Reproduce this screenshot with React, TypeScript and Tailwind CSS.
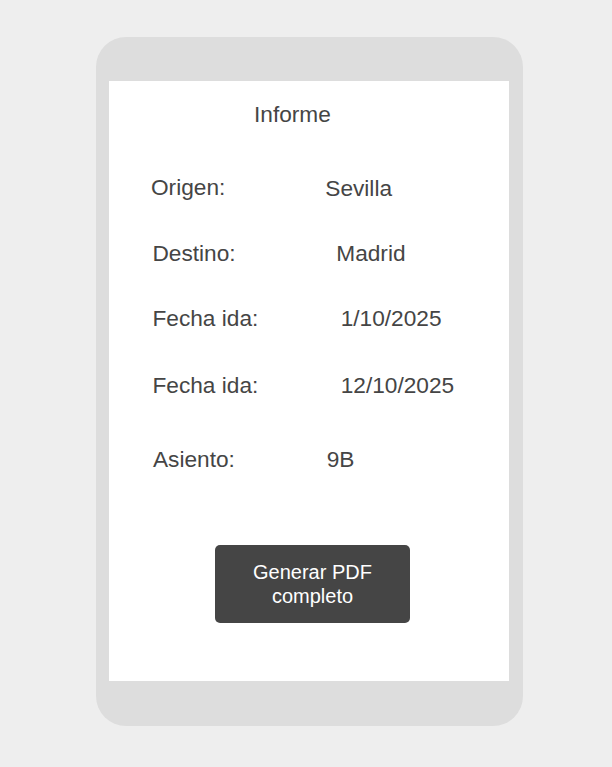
const rows = [
  { label: "Origen:", value: "Sevilla", mt: "mt-[50.5px]", labelBox: "w-[216.3px] pl-[42px]", labelTop: "mt-0", valueTop: "mt-[1px]" },
  { label: "Destino:", value: "Madrid", mt: "mt-[43.3px]", labelBox: "w-[227.3px] pl-[43.5px]", labelTop: "mt-0", valueTop: "mt-0" },
  { label: "Fecha ida:", value: "1/10/2025", mt: "mt-[41.1px]", labelBox: "w-[231.7px] pl-[43.5px]", labelTop: "mt-[1.2px]", valueTop: "mt-[1.5px]" },
  { label: "Fecha ida:", value: "12/10/2025", mt: "mt-[44.1px]", labelBox: "w-[231.7px] pl-[43.5px]", labelTop: "mt-[2px]", valueTop: "mt-[1.5px]" },
  { label: "Asiento:", value: "9B", mt: "mt-[52.7px]", labelBox: "w-[217.7px] pl-[44px]", labelTop: "mt-0", valueTop: "mt-0" },
];

export default function App() {
  return (
    <div className="min-h-[767px] w-full bg-[#eeeeee] pt-[37px] pl-[96px] font-['Liberation_Sans',Arial,sans-serif]">
      <div className="w-[427px] h-[689px] rounded-[30px] bg-[#dddddd] pt-[44px] pl-[13px]">
        <div className="w-[400px] h-[600px] bg-white text-[#454545] text-[22.67px] leading-[22.67px] overflow-hidden">
          <div className="pt-[21.8px] pl-[145px]">Informe</div>
          {rows.map((r, i) => (
            <div key={i} className={`flex h-[22.67px] ${r.mt}`}>
              <div className={`shrink-0 ${r.labelBox} ${r.labelTop}`}>{r.label}</div>
              <div className={r.valueTop}>{r.value}</div>
            </div>
          ))}
          <button className="mt-[74.3px] ml-[106px] w-[195px] h-[78px] pt-[2px] rounded-[5px] bg-[#454545] text-white text-[20px] leading-[23.33px] text-center">
            Generar PDF
            <br />
            completo
          </button>
        </div>
      </div>
    </div>
  );
}
